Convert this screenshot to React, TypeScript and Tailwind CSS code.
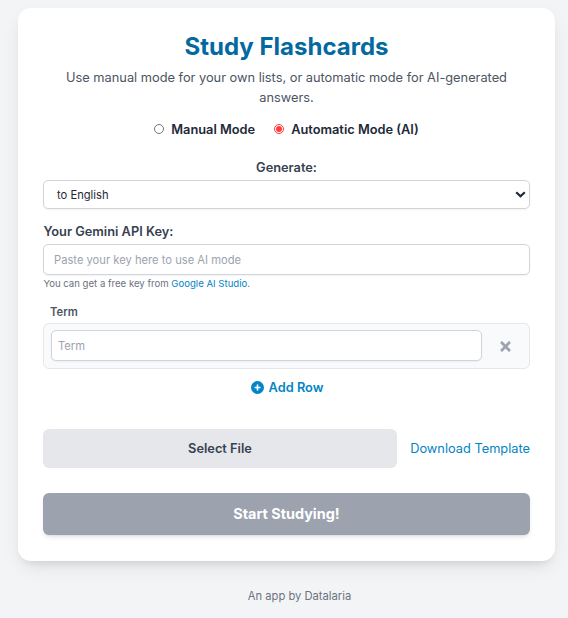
import React from "react";
import { FaTimes } from "react-icons/fa";

function Radio({ label, checked }: { label: string; checked?: boolean }) {
  return (
    <label className="flex items-center gap-[7px]">
      <span
        role="radio"
        aria-checked={!!checked}
        className={
          checked
            ? "mb-[1px] flex size-[10px] items-center justify-center rounded-full border border-[#ff3b3b] bg-white"
            : "mb-[1px] flex size-[10px] rounded-full border border-[#767676] bg-white"
        }
      >
        {checked && <span className="size-[6px] rounded-full bg-[#ff3b3b]" />}
      </span>
      <span className="text-[12.8px] leading-[19px] font-semibold text-gray-800">{label}</span>
    </label>
  );
}

export default function App() {
  return (
    <div
      className="flex h-[618px] w-[568px] flex-col bg-[#f3f4f6] pt-2 pr-[13px] pl-[18px]"
      style={{ fontFamily: 'Inter, "Liberation Sans", sans-serif' }}
    >
      <main className="flex h-[553px] flex-col rounded-[13px] bg-white px-[25px] pt-6 shadow-[0_8px_20px_-4px_rgba(0,0,0,0.1),0_6px_8px_-5px_rgba(0,0,0,0.1)]">
        <h1 className="h-[29px] text-center text-[24px] leading-[29px] font-bold text-[#0369a1]">
          Study Flashcards
        </h1>
        <p className="mt-[7px] h-10 text-center text-[12.8px] leading-5 text-[#4b5563]">
          Use manual mode for your own lists, or automatic mode for AI-generated answers.
        </p>
        <div className="mt-3 flex h-[19px] justify-center gap-[19px]">
          <Radio label="Manual Mode" />
          <Radio label="Automatic Mode (AI)" checked />
        </div>
        <div className="mt-[19px] h-[19px] text-center text-[12.8px] leading-[19px] font-semibold text-[#374151]">
          Generate:
        </div>
        <div className="mt-[3px] flex h-[29px] items-center justify-between rounded-[5px] border border-[#d1d5db] pr-[3px] pl-[13px] text-[11.2px] text-[#1f2937] shadow-[0_1px_2px_rgba(0,0,0,0.05)]">
          <span className="pt-[2px]">to English</span>
          <svg className="mb-[1px]" width="11" height="7" viewBox="0 0 11 7" fill="none" stroke="#1f2937" strokeWidth="2.2">
            <path d="M1.2 1.2 5.5 5.2 9.8 1.2" />
          </svg>
        </div>
        <label className="mt-[13px] h-[19px] pl-[0.4px] text-[12.8px] leading-[19px] font-semibold text-[#374151]">
          Your Gemini API Key:
        </label>
        <input
          placeholder="Paste your key here to use AI mode"
          className="mt-[3px] h-[31px] shrink-0 rounded-[5px] border border-[#d1d5db] px-[10px] text-[11.2px] shadow-[0_1px_2px_rgba(0,0,0,0.05)] placeholder:text-[#9ca3af]"
        />
        <p className="mt-[2px] h-[13px] pl-[0.4px] text-[9.6px] leading-[13px] text-[#6b7280]">
          You can get a free key from <a className="text-[#0284c7]">Google AI Studio</a>.
        </p>
        <div className="mt-[14px] h-4 pl-[7px] text-[11.2px] leading-4 font-semibold text-[#4b5563]">
          Term
        </div>
        <div className="mt-[3px] flex h-[46px] items-center rounded-[6px] border border-[#e5e7eb] bg-[#f9fafb] pl-[7px]">
          <input
            placeholder="Term"
            className="mb-[1px] h-[31px] w-[431px] rounded-[5px] border border-[#d1d5db] bg-white px-[6px] text-[11.2px] shadow-[0_1px_2px_rgba(0,0,0,0.05)] placeholder:text-[#9ca3af]"
          />
          <button className="flex flex-1 justify-center text-[#9ca3af]">
            <FaTimes size={15} />
          </button>
        </div>
        <button className="mt-[9px] flex h-[19px] items-center justify-center gap-[5px] pl-[1px] text-[12.8px] leading-[19px] font-semibold text-[#0284c7]">
          <svg width="13" height="13" viewBox="0 0 13 13">
            <circle cx="6.5" cy="6.5" r="6.5" fill="#0284c7" />
            <path d="M3.5 6.5h6M6.5 3.5v6" stroke="#fff" strokeWidth="1.6" strokeLinecap="butt" />
          </svg>
          Add Row
        </button>
        <div className="mt-8 flex h-[39px] items-center justify-between">
          <button className="h-[39px] w-[354px] rounded-[6px] bg-[#e5e7eb] text-[12.8px] font-semibold text-[#374151]">
            Select File
          </button>
          <a className="text-[12.8px] whitespace-nowrap text-[#0284c7]">Download Template</a>
        </div>
        <button className="mt-[25px] h-[42px] shrink-0 rounded-[6px] bg-[#9ca3af] text-[14.4px] font-bold text-white shadow-[0_3px_5px_-1px_rgba(0,0,0,0.1),0_2px_3px_-2px_rgba(0,0,0,0.1)]">
          Start Studying!
        </button>
      </main>
      <footer className="mt-[27px] pl-[26px] text-center text-[11.2px] leading-4 text-[#6b7280]">
        An app by Datalaria
      </footer>
    </div>
  );
}
